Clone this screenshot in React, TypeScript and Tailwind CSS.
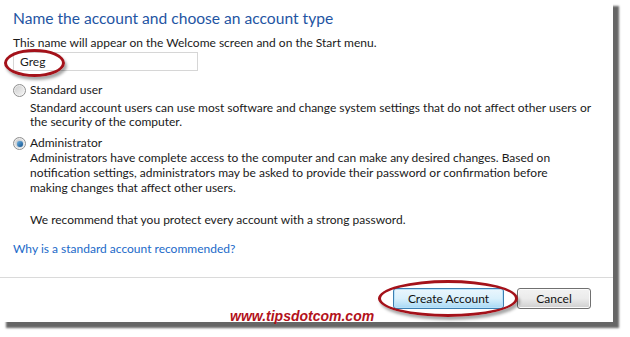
import React from 'react';

function Radio({ checked }: { checked?: boolean }) {
  return (
    <span className="relative mt-[2px] flex h-[13px] w-[13px] shrink-0 items-center justify-center rounded-full border border-[#8f8f8f] bg-gradient-to-br from-[#e8e8e8] to-[#f8f8f8]">
      <span className="h-[9px] w-[9px] rounded-full bg-gradient-to-br from-[#cfcfcf] to-[#f4f4f4]" />
      {checked && (
        <span className="absolute h-[6px] w-[6px] rounded-full bg-gradient-to-br from-[#6fb6e8] to-[#0b4f8a] shadow-[0_0_1px_#1c5b96]" />
      )}
    </span>
  );
}

function Ellipse({ className }: { className: string }) {
  return (
    <div
      className={`pointer-events-none absolute rounded-[50%] border-[3px] border-[#a4121a] shadow-[2px_3px_3px_rgba(0,0,0,0.35)] ${className}`}
    />
  );
}

export default function App() {
  return (
    <div className="h-[337px] w-[630px] bg-white font-['Lato','Noto_Sans',sans-serif] text-[12px] leading-[15px] text-[#1a1a1a]">
      <div className="relative h-[322px] w-[613px] bg-white shadow-[6px_6px_2px_rgba(0,0,0,0.6)]">
        <div className="flex h-[277px] flex-col pl-[13px] pt-[8px]">
          <h1 className="text-[15.6px] leading-[20px] text-[#1f55a3]">
            Name the account and choose an account type
          </h1>
          <p className="mt-[7px]">This name will appear on the Welcome screen and on the Start menu.</p>
          <div className="mt-[2px] flex h-[19px] w-[185px] items-center border border-[#d6d6d6] pl-[6px]">
            Greg
          </div>

          <div className="mt-[11px] flex gap-[4px]">
            <Radio />
            <div>
              <div>Standard user</div>
              <div className="mt-[4px] leading-[14px]">
                Standard account users can use most software and change system settings that do not affect other users or
                <br />
                the security of the computer.
              </div>
            </div>
          </div>

          <div className="mt-[6px] flex gap-[4px]">
            <Radio checked />
            <div>
              <div>Administrator</div>
              <div className="mt-[0px]">
                Administrators have complete access to the computer and can make any desired changes. Based on
                <br />
                notification settings, administrators may be asked to provide their password or confirmation before
                <br />
                making changes that affect other users.
              </div>
              <div className="mt-[17px]">We recommend that you protect every account with a strong password.</div>
            </div>
          </div>

          <a className="mt-[14px] text-[#1b6ac9]">Why is a standard account recommended?</a>
        </div>

        <div className="h-px bg-[#dadada]" />

        <div className="flex justify-end gap-[13px] pr-[22px] pt-[10px]">
          <button className="h-[21px] w-[111px] rounded-[3px] border border-[#3c7fb1] bg-gradient-to-b from-[#eaf6fd] via-[#d9f0fc] to-[#a7d9f5] text-[12px] text-[#111] shadow-[inset_0_0_0_1px_#b9e2f9]">
            Create Account
          </button>
          <button className="h-[21px] w-[74px] rounded-[3px] border border-[#707070] bg-gradient-to-b from-[#f2f2f2] via-[#ebebeb] to-[#cfcfcf] text-[12px] text-[#111] shadow-[inset_0_0_0_1px_#fbfbfb]">
            Cancel
          </button>
        </div>

        <div className="absolute left-[230px] top-[306px] font-['Liberation_Sans',sans-serif] text-[14px] font-bold italic leading-[20px] text-[#b3121b]">
          www.tipsdotcom.com
        </div>

        <Ellipse className="left-[4px] top-[49px] h-[28px] w-[61px]" />
        <Ellipse className="left-[378px] top-[280px] h-[37px] w-[140px]" />
      </div>
    </div>
  );
}
